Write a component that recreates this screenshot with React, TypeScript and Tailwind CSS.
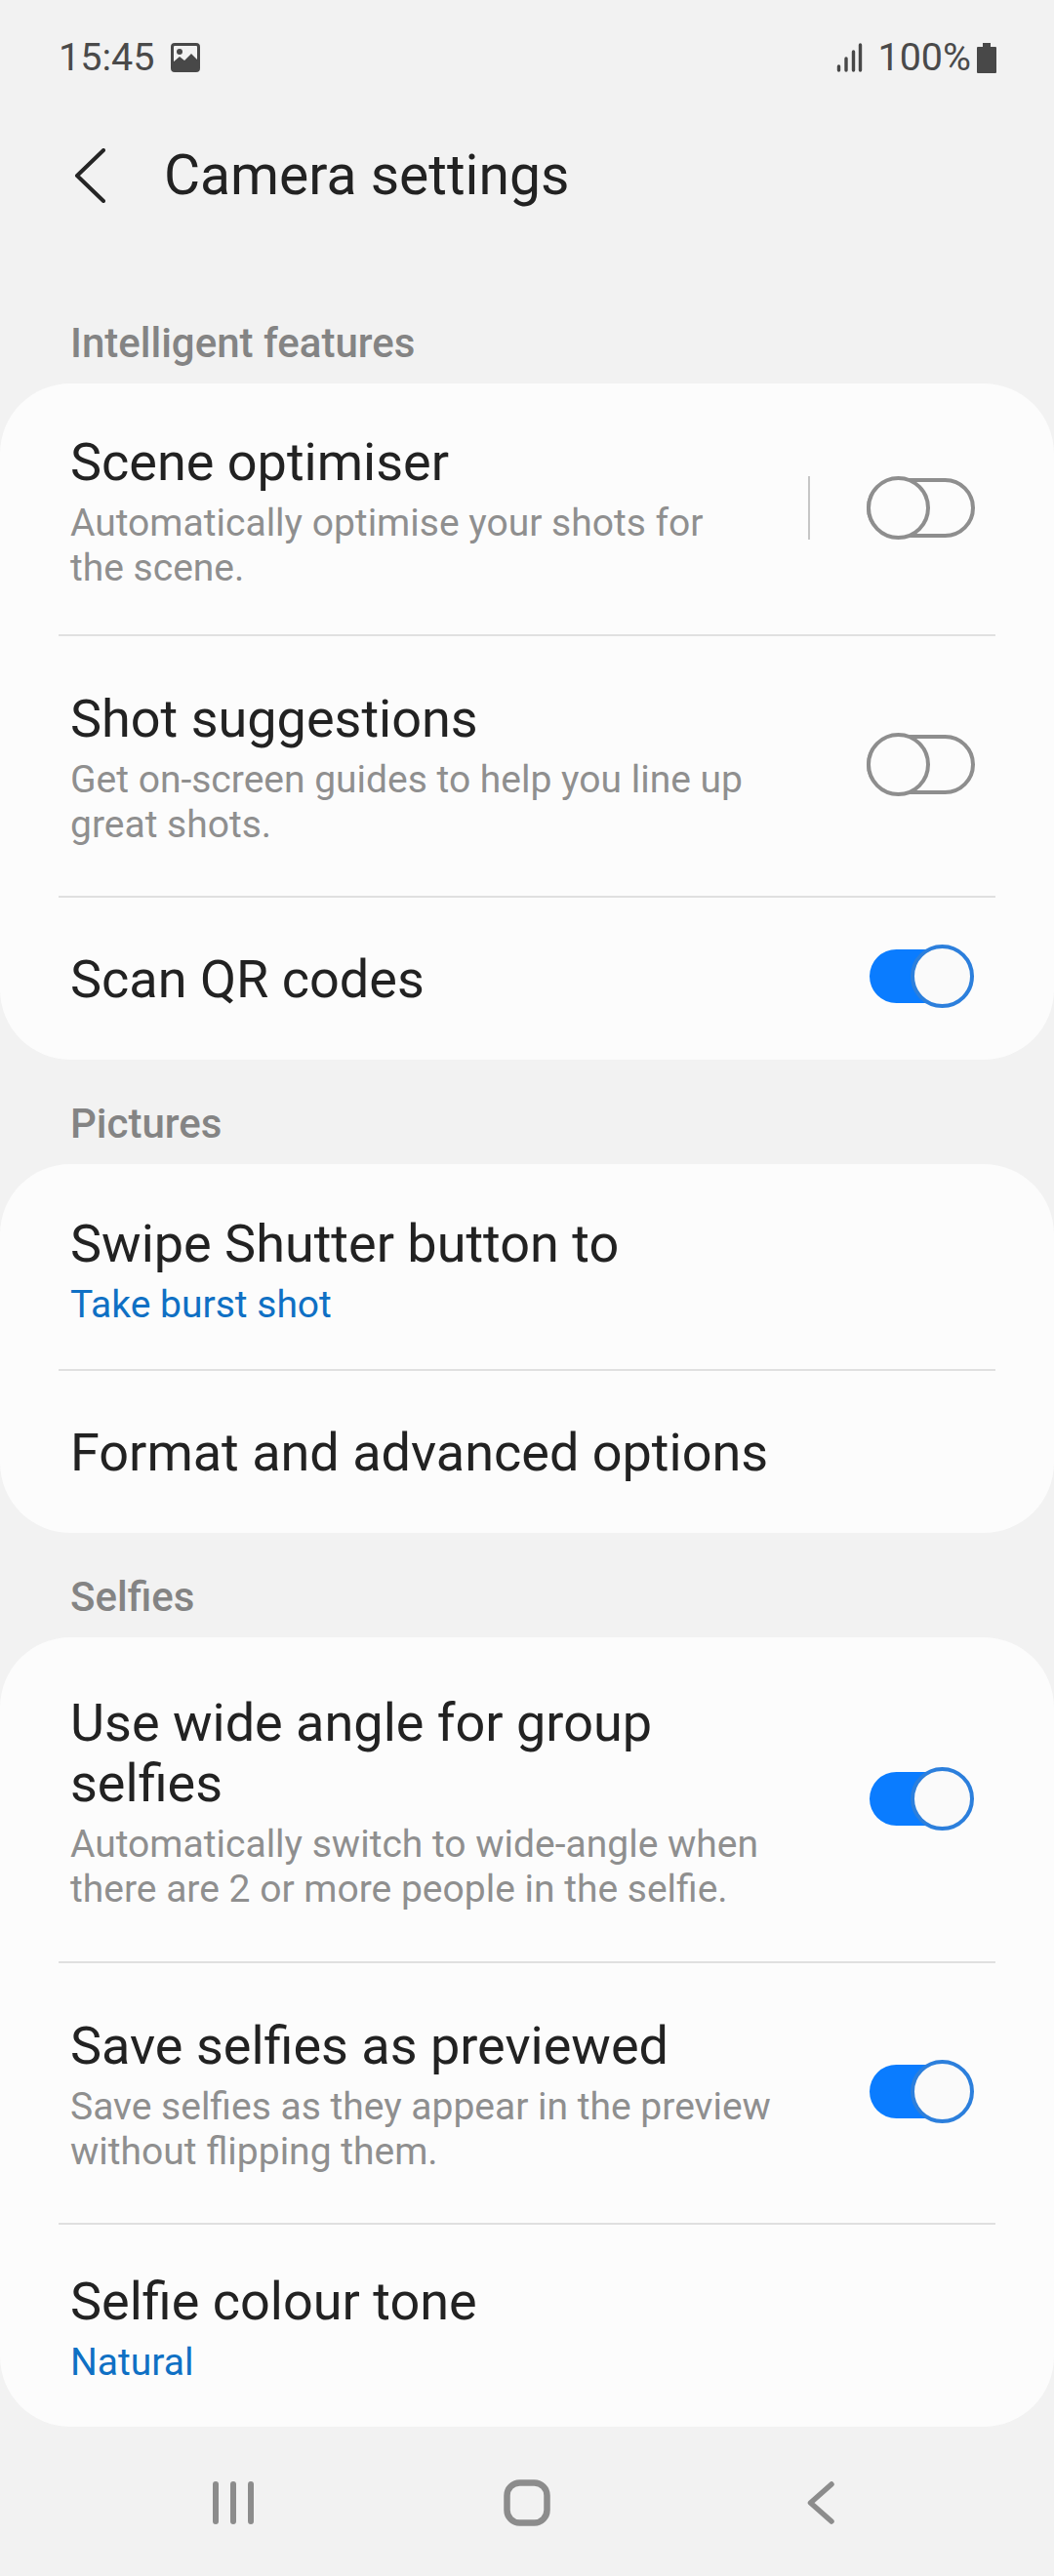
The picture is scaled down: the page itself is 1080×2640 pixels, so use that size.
import React from "react";

function Toggle({ on }: { on: boolean }) {
  if (on) {
    return (
      <div className="relative h-[65px] w-[108px] shrink-0">
        <div className="absolute left-0 top-[5px] h-[55px] w-[90px] rounded-full bg-[#0a7cff]" />
        <div className="absolute right-[1px] top-0 h-[65px] w-[65px] rounded-full border-[4px] border-[#2c7fdc] bg-[#fafafa]" />
      </div>
    );
  }
  return (
    <div className="relative h-[65px] w-[111px] shrink-0">
      <div className="absolute left-0 top-[2px] h-[61px] w-[111px] rounded-full border-[4px] border-[#8e8e8e]" />
      <div className="absolute left-0 top-0 h-[65px] w-[65px] rounded-full border-[4px] border-[#8e8e8e] bg-[#fcfcfc]" />
    </div>
  );
}

type RowProps = {
  title: string;
  sub?: string;
  blue?: string;
  on?: boolean;
  sep?: boolean;
  pad: string;
};

function Row({ title, sub, blue, on, sep, pad }: RowProps) {
  return (
    <div className={`flex items-center justify-between pl-[72px] pr-[81px] ${pad}`}>
      <div className="flex flex-col">
        <div className="whitespace-pre-line text-[54px] leading-[62px] text-[#222222]">{title}</div>
        {sub && <div className="mt-[8px] whitespace-pre-line text-[39px] leading-[46px] text-[#8f8f8f]">{sub}</div>}
        {blue && <div className="mt-[8px] text-[39px] leading-[46px] text-[#0f70c4]">{blue}</div>}
      </div>
      <div className="-mb-[7px] -mt-[14px] flex items-center">
        {sep && <div className="mr-[58px] h-[65px] w-[2px] bg-[#c6c6c6]" />}
        {on !== undefined && <Toggle on={on} />}
      </div>
    </div>
  );
}

function Divider() {
  return <div className="mx-[60px] h-[2px] bg-[#e0e0e0]" />;
}

function Label({ children }: { children: React.ReactNode }) {
  return <div className="h-[107px] pl-[72px] pt-[43px] text-[42px] font-medium leading-[46px] text-[#848484]">{children}</div>;
}

function Card({ children }: { children: React.ReactNode }) {
  return <div className="rounded-[72px] bg-[#fcfcfc]">{children}</div>;
}

export default function App() {
  return (
    <div className="flex h-[2640px] w-[1080px] flex-col overflow-hidden bg-[#f2f2f2] font-['Roboto',sans-serif]">
      <div className="flex h-[116px] items-center justify-between pl-[60px] pr-[59px] pt-[2px] text-[39.5px] text-[#4a4a4a]">
        <div className="flex items-center gap-[17px]">
          <span>15:45</span>
          <svg width="30" height="30" viewBox="0 0 30 30">
            <rect x="1.5" y="1.5" width="27" height="27" rx="2.5" fill="#f2f2f2" stroke="#484848" strokeWidth="3" />
            <circle cx="9" cy="9" r="3" fill="#484848" />
            <path d="M2 28 V20 L9 14 L14 18 L21 11 L28 18 V28 Z" fill="#484848" />
          </svg>
        </div>
        <div className="flex items-center">
          <svg width="27" height="30" viewBox="0 0 27 30" className="mr-[15px]">
            <g stroke="#484848" strokeWidth="3.4" strokeLinecap="round">
              <path d="M2.5 24 V28" />
              <path d="M10 16 V28" />
              <path d="M17.5 9 V28" />
              <path d="M24.5 2 V28" />
            </g>
          </svg>
          <span>100%</span>
          <svg width="20" height="31" viewBox="0 0 20 31" className="ml-[6px]">
            <path d="M6 0 H14 V4 H19 A1 1 0 0 1 20 5 V30 A1 1 0 0 1 19 31 H1 A1 1 0 0 1 0 30 V5 A1 1 0 0 1 1 4 H6 Z" fill="#484848" />
          </svg>
        </div>
      </div>

      <div className="flex h-[128px] items-center pl-[76px]">
        <svg width="32" height="56" viewBox="0 0 32 56" fill="none">
          <path d="M30 2 L3 28 L30 54" stroke="#252525" strokeWidth="4" strokeLinecap="round" strokeLinejoin="round" />
        </svg>
        <div className="ml-[60px] text-[57px] leading-[64px] text-[#222222]">Camera settings</div>
      </div>
      <div className="h-[42px]" />

      <Label>Intelligent features</Label>
      <Card>
        <Row
          title="Scene optimiser"
          sub={"Automatically optimise your shots for\nthe scene."}
          on={false}
          sep
          pad="pt-[50px] pb-[45px]"
        />
        <Divider />
        <Row
          title="Shot suggestions"
          sub={"Get on-screen guides to help you line up\ngreat shots."}
          on={false}
          pad="pt-[54px] pb-[50px]"
        />
        <Divider />
        <Row title="Scan QR codes" on pad="pt-[53px] pb-[51px]" />
      </Card>

      <Label>Pictures</Label>
      <Card>
        <Row title="Swipe Shutter button to" blue="Take burst shot" pad="pt-[51px] pb-[43px]" />
        <Divider />
        <Row title="Format and advanced options" pad="pt-[53px] pb-[51px]" />
      </Card>

      <Label>Selfies</Label>
      <Card>
        <Row
          title={"Use wide angle for group\nselfies"}
          sub={"Automatically switch to wide-angle when\nthere are 2 or more people in the selfie."}
          on
          pad="pt-[57px] pb-[51px]"
        />
        <Divider />
        <Row
          title="Save selfies as previewed"
          sub={"Save selfies as they appear in the preview\nwithout flipping them."}
          on
          pad="pt-[54px] pb-[50px]"
        />
        <Divider />
        <Row title="Selfie colour tone" blue="Natural" pad="pt-[48px] pb-[43px]" />
      </Card>

      <div className="grid flex-1 grid-cols-3 items-center px-[88px] pt-[2px]">
        <svg width="42" height="44" viewBox="0 0 42 44" className="justify-self-center">
          <g stroke="#8c8c8c" strokeWidth="6" strokeLinecap="round">
            <path d="M3 3 V41" />
            <path d="M21 3 V41" />
            <path d="M39 3 V41" />
          </g>
        </svg>
        <svg width="48" height="48" viewBox="0 0 48 48" className="justify-self-center" fill="none">
          <rect x="3.5" y="3.5" width="41" height="41" rx="13" stroke="#8c8c8c" strokeWidth="6.5" />
        </svg>
        <svg width="28" height="44" viewBox="0 0 28 44" className="justify-self-center" fill="none">
          <path d="M25 3 L3.5 22 L25 41" stroke="#8c8c8c" strokeWidth="5.5" strokeLinecap="round" strokeLinejoin="round" />
        </svg>
      </div>
    </div>
  );
}
